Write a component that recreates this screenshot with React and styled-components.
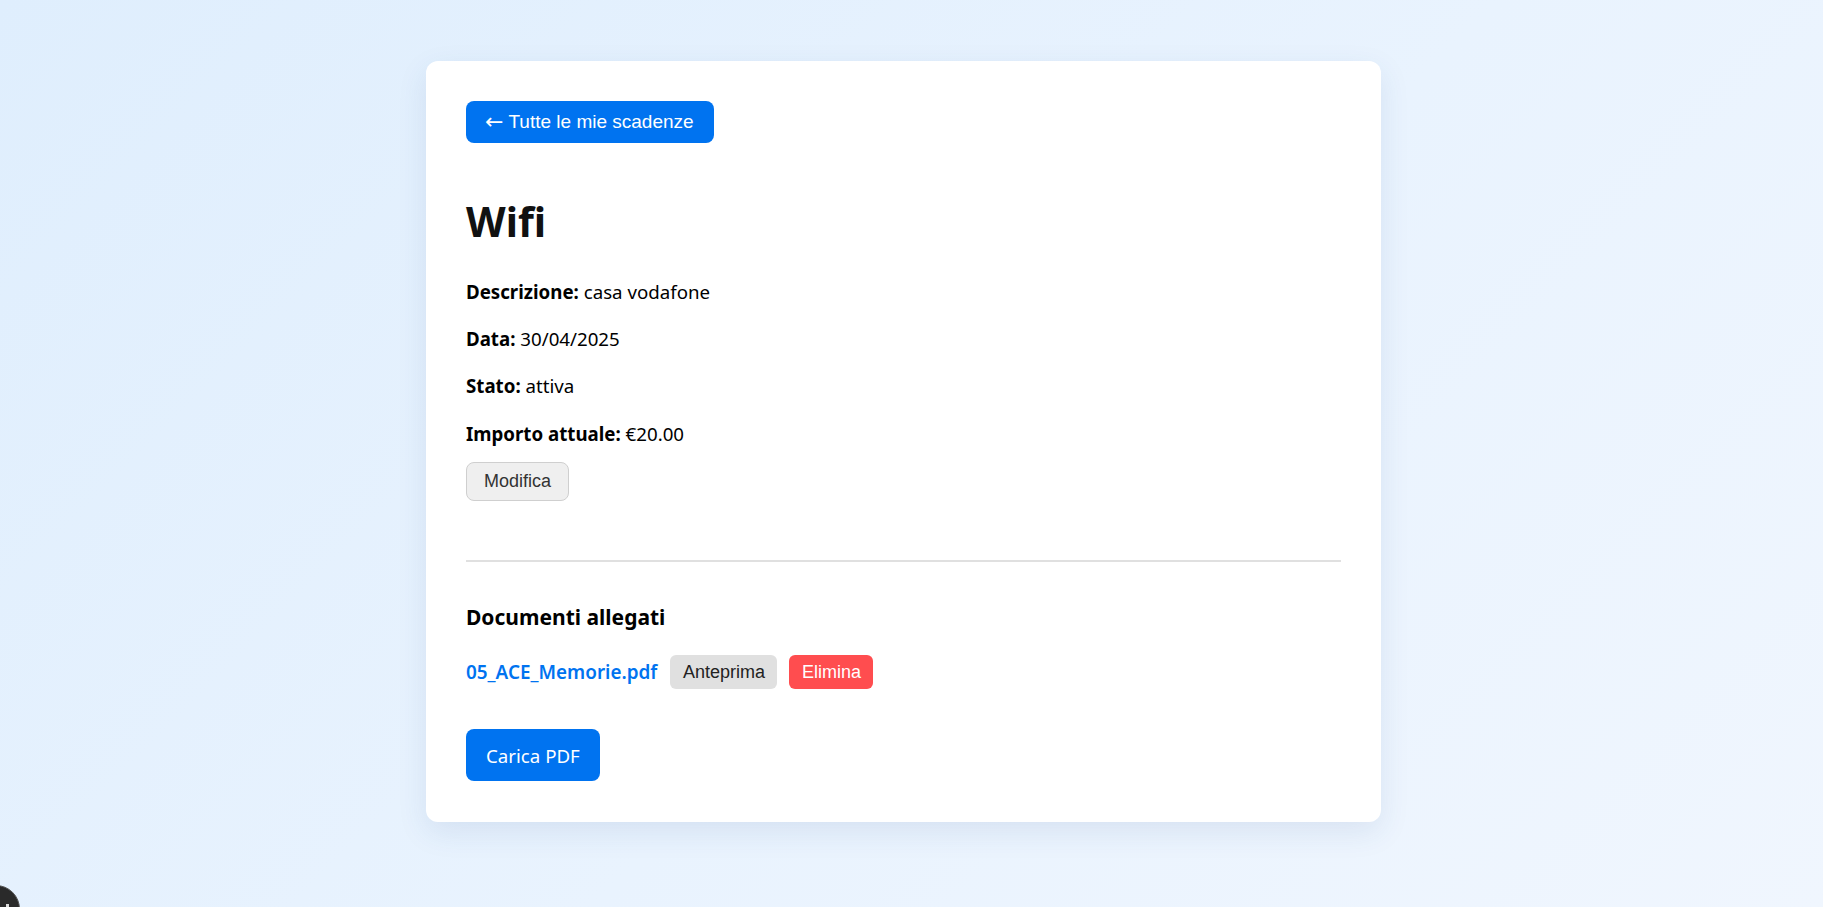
import React from 'react'
import styled, { createGlobalStyle } from 'styled-components'

const GlobalStyle = createGlobalStyle`
  html, body {
    margin: 0;
    padding: 0;
  }
  body {
    min-height: 907px;
    background: linear-gradient(135deg, #dfeefd 0%, #e9f3fe 55%, #f0f6fe 100%);
    font-family: 'Noto Sans', 'Segoe UI', sans-serif;
    color: #000;
  }
`

const Page = styled.div`
  display: flex;
  justify-content: center;
  padding: 61px 16px 0 0;
  min-height: 907px;
  box-sizing: border-box;
`

const Card = styled.div`
  width: 955px;
  height: 761px;
  box-sizing: border-box;
  padding: 40px;
  background: #fff;
  border-radius: 12px;
  box-shadow: 0 10px 30px rgba(40, 80, 140, 0.1);
`

const Button = styled.button`
  display: inline-flex;
  align-items: center;
  justify-content: center;
  box-sizing: border-box;
  font-family: 'Liberation Sans', Arial, sans-serif;
  font-size: 18px;
  cursor: pointer;
  border: none;
`

const BackButton = styled(Button)`
  height: 42px;
  padding: 0 20px 0 19px;
  border-radius: 8px;
  background: #0073f0;
  color: #fff;
  font-size: 19px;
`

const Arrow = styled.span`
  font-family: 'DejaVu Sans', sans-serif;
  font-size: 22px;
  margin-right: 5px;
  line-height: 1;
`

const Title = styled.h1`
  margin: 53.5px 0 0;
  font-size: 41px;
  line-height: 1.2;
  font-weight: 700;
  color: #111;
`

const InfoList = styled.div`
  display: flex;
  flex-direction: column;
  gap: 18.5px;
  margin-top: 32px;
`

const Info = styled.p`
  margin: 0;
  font-size: 18.7px;
  line-height: 28.8px;
`

const Label = styled.strong`
  font-weight: 700;
`

const EditButton = styled(Button)`
  margin-top: 14px;
  height: 39px;
  padding: 0 17px;
  border-radius: 8px;
  border: 1px solid #cfcfcf;
  background: #efefef;
  color: #333;
`

const Divider = styled.hr`
  margin: 58.5px 0 0;
  border: none;
  border-top: 2px solid #e0e0e0;
`

const SectionTitle = styled.h3`
  margin: 42px 0 0;
  font-size: 21px;
  line-height: 27.3px;
  font-weight: 700;
`

const FileRow = styled.div`
  display: flex;
  align-items: center;
  gap: 12px;
  margin-top: 24px;
`

const FileLink = styled.a`
  color: #0073f0;
  font-size: 18.9px;
  font-weight: 600;
  text-decoration: none;
  margin-right: 1px;
`

const SmallButton = styled(Button)`
  height: 34px;
  padding: 0 12.5px;
  border-radius: 6px;
  background: ${(p) => (p.danger ? '#ff4d4f' : '#e0e0e0')};
  color: ${(p) => (p.danger ? '#fff' : '#222')};
`

const UploadButton = styled(Button)`
  margin-top: 40px;
  height: 52px;
  padding: 0 20px;
  border-radius: 8px;
  background: #0073f0;
  color: #fff;
  font-family: 'Noto Sans', 'Segoe UI', sans-serif;
  font-size: 18.7px;
`

const DevBadge = styled.div`
  position: fixed;
  left: -28px;
  bottom: -26px;
  width: 46px;
  height: 46px;
  border-radius: 50%;
  background: #2a2a2a;
  border: 1px solid #555;
  &::after {
    content: '';
    position: absolute;
    right: 10px;
    top: 18px;
    width: 3px;
    height: 10px;
    background: #ddd;
  }
`

const fields = [
  ['Descrizione:', 'casa vodafone'],
  ['Data:', '30/04/2025'],
  ['Stato:', 'attiva'],
  ['Importo attuale:', '€20.00'],
]

export default function App() {
  return (
    <>
      <GlobalStyle />
      <Page>
        <Card>
          <BackButton>
            <Arrow>←</Arrow>Tutte le mie scadenze
          </BackButton>
          <Title>Wifi</Title>
          <InfoList>
            {fields.map(([label, value]) => (
              <Info key={label}>
                <Label>{label}</Label> {value}
              </Info>
            ))}
          </InfoList>
          <EditButton>Modifica</EditButton>
          <Divider />
          <SectionTitle>Documenti allegati</SectionTitle>
          <FileRow>
            <FileLink href="#">05_ACE_Memorie.pdf</FileLink>
            <SmallButton>Anteprima</SmallButton>
            <SmallButton danger>Elimina</SmallButton>
          </FileRow>
          <UploadButton>Carica PDF</UploadButton>
        </Card>
      </Page>
      <DevBadge />
    </>
  )
}
